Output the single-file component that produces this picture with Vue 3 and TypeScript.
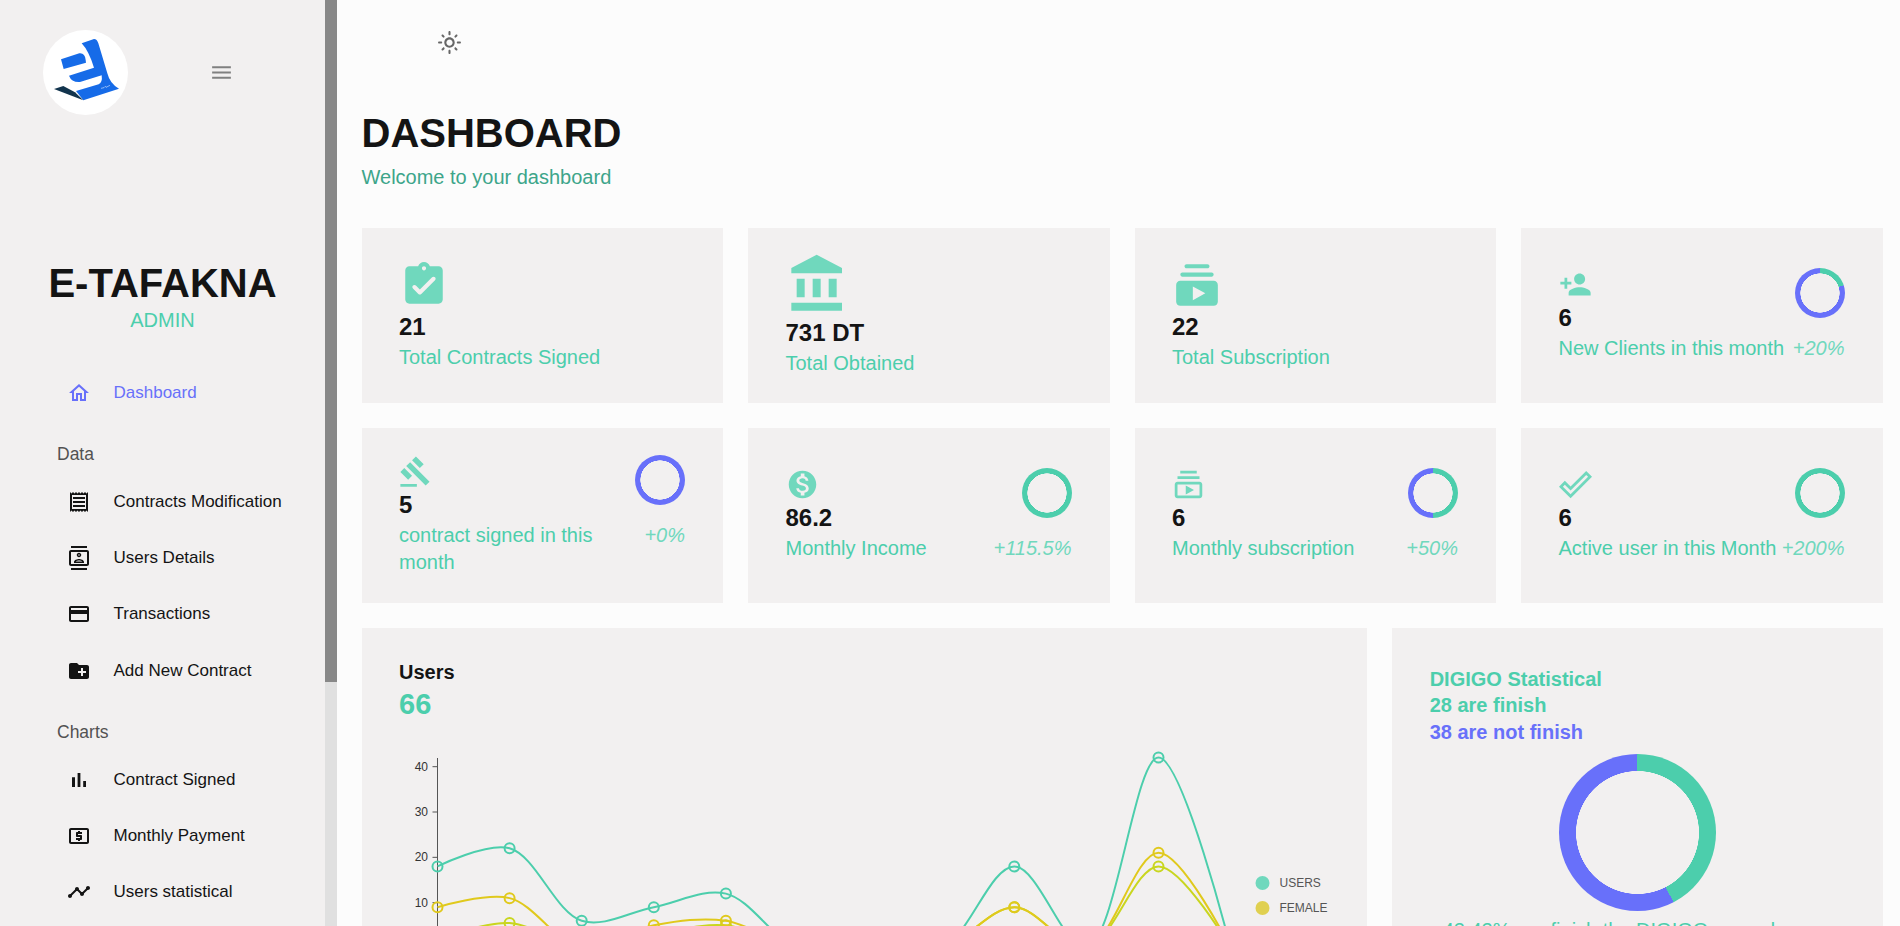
<template>
  <div class="layout">
    <aside class="sidebar">
      <div class="sidebar-body">
        <div class="brand-row">
          <svg class="logo" viewBox="69 60 255 255">
            <circle cx="196.5" cy="187.5" r="127.5" fill="#fff" />
            <path d="M102 237 L130 228 L165 247 L190 271 Z" fill="#12344d" />
            <path d="M123 148 L178 130 Q195 128 197 150 L198 158 L131 177 Z" fill="#166be8" />
            <path
              d="M185 100 L222 87 Q231 87 235 100 L262 190 Q270 222 297 236 L190 271 L168 243 L236 223 Q248 218 245 196 L180 216 Q155 218 147 197 L222 173 Q206 122 185 100 Z"
              fill="#166be8"
            />
            <path d="M243 235 L252 233 L256 229 L258 232 L270 226" fill="none" stroke="#fff" stroke-width="1.5" />
          </svg>
          <svg class="menu-icon" viewBox="0 0 24 24"><path :d="icons.menu" /></svg>
        </div>
        <div class="profile">
          <h2>E-TAFAKNA</h2>
          <p>ADMIN</p>
        </div>
        <nav>
          <template v-for="group in nav" :key="group.title">
            <div v-if="group.title" class="nav-title">{{ group.title }}</div>
            <a v-for="item in group.items" :key="item.label" class="nav-item" :class="{ active: item.active }">
              <svg viewBox="0 0 24 24"><path :d="item.icon" /></svg>
              <span>{{ item.label }}</span>
            </a>
          </template>
        </nav>
      </div>
      <div class="scrollbar"><div class="scrollbar-thumb"></div></div>
    </aside>

    <main class="content">
      <div class="topbar">
        <svg viewBox="0 0 24 24"><path :d="icons.sun" /></svg>
      </div>
      <header class="page-head">
        <h1>DASHBOARD</h1>
        <p>Welcome to your dashboard</p>
      </header>

      <section class="grid">
        <div v-for="stat in stats" :key="stat.label" class="stat-card">
          <div class="stat-top">
            <div>
              <svg class="stat-icon" :class="stat.size" viewBox="0 0 24 24"><path :d="stat.icon" fill-rule="evenodd" /></svg>
              <div class="stat-value">{{ stat.value }}</div>
            </div>
            <div v-if="stat.progress !== undefined" class="ring" :style="ringStyle(stat.progress)"></div>
          </div>
          <div class="stat-bottom">
            <span class="stat-label">{{ stat.label }}</span>
            <span v-if="stat.delta" class="stat-delta">{{ stat.delta }}</span>
          </div>
        </div>

        <div class="chart-card">
          <h3>Users</h3>
          <div class="chart-total">66</div>
          <svg class="line-chart" width="1006" height="300">
            <line x1="75.5" y1="35" x2="75.5" y2="300" stroke="#555" />
            <g v-for="t in [40, 30, 20, 10]" :key="t">
              <line x1="70.5" x2="75.5" :y1="yOf(t)" :y2="yOf(t)" stroke="#555" />
              <text x="66" :y="yOf(t) + 4" text-anchor="end" class="tick">{{ t }}</text>
            </g>
            <g v-for="s in series" :key="s.name">
              <path :d="linePath(s.values)" fill="none" :stroke="s.color" stroke-width="2" />
              <circle
                v-for="(v, i) in s.values"
                :key="i"
                :cx="xOf(i)"
                :cy="yOf(v)"
                r="5"
                fill="none"
                :stroke="s.color"
                stroke-width="2"
              />
            </g>
            <g v-for="l in legend" :key="l.name">
              <circle cx="900.5" :cy="l.y" r="7" :fill="l.color" />
              <text x="917.5" :y="l.y + 4" class="legend">{{ l.name }}</text>
            </g>
          </svg>
        </div>

        <div class="donut-card">
          <div class="donut-line">DIGIGO Statistical</div>
          <div class="donut-line">28 are finish</div>
          <div class="donut-line blue">38 are not finish</div>
          <div class="donut"></div>
          <p class="donut-caption">42.42% are finish the DIGIGO procedure</p>
        </div>
      </section>
    </main>
  </div>
</template>

<script setup lang="ts">
const icons = {
  menu: 'M3 18h18v-2H3v2zm0-5h18v-2H3v2zm0-7v2h18V6H3z',
  sun: 'M12 9c1.65 0 3 1.35 3 3s-1.35 3-3 3-3-1.35-3-3 1.35-3 3-3m0-2c-2.76 0-5 2.24-5 5s2.24 5 5 5 5-2.24 5-5-2.24-5-5-5zM2 13h2c.55 0 1-.45 1-1s-.45-1-1-1H2c-.55 0-1 .45-1 1s.45 1 1 1zm18 0h2c.55 0 1-.45 1-1s-.45-1-1-1h-2c-.55 0-1 .45-1 1s.45 1 1 1zM11 2v2c0 .55.45 1 1 1s1-.45 1-1V2c0-.55-.45-1-1-1s-1 .45-1 1zm0 18v2c0 .55.45 1 1 1s1-.45 1-1v-2c0-.55-.45-1-1-1s-1 .45-1 1zM5.99 4.58c-.39-.39-1.03-.39-1.41 0-.39.39-.39 1.03 0 1.41l1.06 1.06c.39.39 1.03.39 1.41 0s.39-1.03 0-1.41L5.99 4.58zm12.37 12.37c-.39-.39-1.03-.39-1.41 0-.39.39-.39 1.03 0 1.41l1.06 1.06c.39.39 1.03.39 1.41 0 .39-.39.39-1.03 0-1.41l-1.06-1.06zm1.06-10.96c.39-.39.39-1.03 0-1.41-.39-.39-1.03-.39-1.41 0l-1.06 1.06c-.39.39-.39 1.03 0 1.41s1.03.39 1.41 0l1.06-1.06zM7.05 18.36c.39-.39.39-1.03 0-1.41-.39-.39-1.03-.39-1.41 0l-1.06 1.06c-.39.39-.39 1.03 0 1.41s1.03.39 1.41 0l1.06-1.06z',
  home: 'M12 5.69l5 4.5V18h-2v-6H9v6H7v-7.81l5-4.5M12 3L2 12h3v8h6v-6h2v6h6v-8h3L12 3z',
  receipt: 'M19.5 3.5 18 2l-1.5 1.5L15 2l-1.5 1.5L12 2l-1.5 1.5L9 2 7.5 3.5 6 2 4.5 3.5 3 2v20l1.5-1.5L6 22l1.5-1.5L9 22l1.5-1.5L12 22l1.5-1.5L15 22l1.5-1.5L18 22l1.5-1.5L21 22V2l-1.5 1.5zM19 19.09H5V4.91h14v14.18zM6 15h12v2H6zm0-4h12v2H6zm0-4h12v2H6z',
  contacts: 'M20 0H4v2h16V0zM4 24h16v-2H4v2zM20 4H4c-1.1 0-2 .9-2 2v12c0 1.1.9 2 2 2h16c1.1 0 2-.9 2-2V6c0-1.1-.9-2-2-2zm0 14H4V6h16v12zm-8-6.75c1.24 0 2.25-1.01 2.25-2.25S13.24 6.75 12 6.75 9.75 7.76 9.75 9s1.01 2.25 2.25 2.25zm0-3c.41 0 .75.34.75.75s-.34.75-.75.75-.75-.34-.75-.75.34-.75.75-.75zM17 15.99c0-2.09-3.31-2.99-5-2.99s-5 .9-5 2.99V17h10v-1.01zm-8.19-.49c.61-.52 2.03-1 3.19-1 1.17 0 2.59.48 3.2 1H8.81z',
  card: 'M20 4H4c-1.11 0-1.99.89-1.99 2L2 18c0 1.11.89 2 2 2h16c1.11 0 2-.89 2-2V6c0-1.11-.89-2-2-2zm0 14H4v-6h16v6zm0-10H4V6h16v2z',
  folder: 'M20 6h-8l-2-2H4c-1.11 0-1.99.89-1.99 2L2 18c0 1.11.89 2 2 2h16c1.11 0 2-.89 2-2V8c0-1.11-.89-2-2-2zm-1 8h-3v3h-2v-3h-3v-2h3V9h2v3h3v2z',
  bars: 'M5 9.2h3V19H5zM10.6 5h2.8v14h-2.8zm5.6 8H19v6h-2.8z',
  atm: 'M11 17h2v-1h1c.55 0 1-.45 1-1v-3c0-.55-.45-1-1-1h-3v-1h4V8h-2V7h-2v1h-1c-.55 0-1 .45-1 1v3c0 .55.45 1 1 1h3v1H9v2h2v1zm9-13H4c-1.11 0-1.99.89-1.99 2L2 18c0 1.11.89 2 2 2h16c1.11 0 2-.89 2-2V6c0-1.11-.89-2-2-2zm0 14H4V6h16v12z',
  timeline: 'M23 8c0 1.1-.9 2-2 2-.18 0-.35-.02-.51-.07l-3.56 3.55c.05.16.07.34.07.52 0 1.1-.9 2-2 2s-2-.9-2-2c0-.18.02-.36.07-.52l-2.55-2.55c-.16.05-.34.07-.52.07s-.36-.02-.52-.07l-4.55 4.56c.05.16.07.33.07.51 0 1.1-.9 2-2 2s-2-.9-2-2 .9-2 2-2c.18 0 .35.02.51.07l4.56-4.55C8.02 9.36 8 9.18 8 9c0-1.1.9-2 2-2s2 .9 2 2c0 .18-.02.36-.07.52l2.55 2.55c.16-.05.34-.07.52-.07s.36.02.52.07l3.55-3.56C19.02 8.35 19 8.18 19 8c0-1.1.9-2 2-2s2 .9 2 2z',
  assignment: 'M19 3h-4.18C14.4 1.84 13.3 1 12 1s-2.4.84-2.82 2H5c-1.1 0-2 .9-2 2v14c0 1.1.9 2 2 2h14c1.1 0 2-.9 2-2V5c0-1.1-.9-2-2-2zm-7 0c.55 0 1 .45 1 1s-.45 1-1 1-1-.45-1-1 .45-1 1-1zM9.29 16.29 6.7 13.7a.9959.9959 0 0 1 0-1.41c.39-.39 1.02-.39 1.41 0L10 14.17l5.88-5.88c.39-.39 1.02-.39 1.41 0 .39.39.39 1.02 0 1.41l-6.59 6.59c-.38.39-1.02.39-1.41 0z',
  bank: 'M4 10v7h3v-7H4zm6 0v7h3v-7h-3zM2 22h19v-3H2v3zm14-12v7h3v-7h-3zm-4.5-9L2 6v2h19V6l-9.5-5z',
  subs: 'M19 8H5c-.55 0-1-.45-1-1s.45-1 1-1h14c.55 0 1 .45 1 1s-.45 1-1 1zm-2-4H7c-.55 0-1-.45-1-1s.45-1 1-1h10c.55 0 1 .45 1 1s-.45 1-1 1zm3 6H4c-1.1 0-2 .9-2 2v8c0 1.1.9 2 2 2h16c1.1 0 2-.9 2-2v-8c0-1.1-.9-2-2-2zm-10 2.73 6 3.27-6 3.27z',
  subsOutline: 'M4 6h16v2H4zm2-4h12v2H6zm14 8H4c-1.1 0-2 .9-2 2v8c0 1.1.9 2 2 2h16c1.1 0 2-.9 2-2v-8c0-1.1-.9-2-2-2zm0 10H4v-8h16v8zm-10-7.27v6.53L16 16z',
  personAdd: 'M15 12c2.21 0 4-1.79 4-4s-1.79-4-4-4-4 1.79-4 4 1.79 4 4 4zm-9-2V7H4v3H1v2h3v3h2v-3h3v-2H6zm9 4c-2.67 0-8 1.34-8 4v2h16v-2c0-2.66-5.33-4-8-4z',
  gavel: 'M1 21h12v2H1v-2zM5.245 8.07l2.83-2.827 14.14 14.142-2.828 2.828L5.245 8.07zM12.317 1l5.657 5.656-2.83 2.83-5.654-5.66L12.317 1zM3.825 9.485l5.657 5.657-2.828 2.828-5.657-5.657 2.828-2.828z',
  money: 'M12 2C6.48 2 2 6.48 2 12s4.48 10 10 10 10-4.48 10-10S17.52 2 12 2zm1.41 16.09V20h-2.67v-1.93c-1.71-.36-3.16-1.46-3.27-3.4h1.96c.1 1.05.82 1.87 2.65 1.87 1.96 0 2.4-.98 2.4-1.59 0-.83-.44-1.61-2.67-2.14-2.48-.6-4.18-1.62-4.18-3.67 0-1.72 1.39-2.84 3.11-3.21V4h2.67v1.95c1.86.45 2.79 1.86 2.87 3.39H14.3c-.05-1.11-.64-1.87-2.22-1.87-1.5 0-2.4.68-2.4 1.64 0 .84.65 1.39 2.67 1.91s4.18 1.39 4.18 3.91c-.01 1.83-1.38 2.83-3.12 3.16z',
  doneOutline: 'M19.77 5.03l1.4 1.4L8.43 19.17l-5.6-5.6 1.4-1.4 4.2 4.2L19.77 5.03m0-2.83L8.43 13.54l-4.2-4.2L0 13.57 8.43 22 24 6.43 19.77 2.2z',
}

const nav = [
  { title: '', items: [{ label: 'Dashboard', icon: icons.home, active: true }] },
  {
    title: 'Data',
    items: [
      { label: 'Contracts Modification', icon: icons.receipt },
      { label: 'Users Details', icon: icons.contacts },
      { label: 'Transactions', icon: icons.card },
      { label: 'Add New Contract', icon: icons.folder },
    ],
  },
  {
    title: 'Charts',
    items: [
      { label: 'Contract Signed', icon: icons.bars },
      { label: 'Monthly Payment', icon: icons.atm },
      { label: 'Users statistical', icon: icons.timeline },
    ],
  },
]

type Stat = {
  icon: string
  size: string
  value: string
  label: string
  delta?: string
  progress?: number
}

const stats: Stat[] = [
  { icon: icons.assignment, size: 'lg', value: '21', label: 'Total Contracts Signed' },
  { icon: icons.bank, size: 'xl', value: '731 DT', label: 'Total Obtained' },
  { icon: icons.subs, size: 'lg', value: '22', label: 'Total Subscription' },
  { icon: icons.personAdd, size: 'sm', value: '6', label: 'New Clients in this month', delta: '+20%', progress: 0.2 },
  { icon: icons.gavel, size: 'sm', value: '5', label: 'contract signed in this month', delta: '+0%', progress: 0 },
  { icon: icons.money, size: 'sm', value: '86.2', label: 'Monthly Income', delta: '+115.5%', progress: 1.155 },
  { icon: icons.subsOutline, size: 'sm', value: '6', label: 'Monthly subscription', delta: '+50%', progress: 0.5 },
  { icon: icons.doneOutline, size: 'sm', value: '6', label: 'Active user in this Month', delta: '+200%', progress: 2 },
]

function ringStyle(progress: number) {
  const angle = Math.min(progress, 1) * 360
  return {
    background: `radial-gradient(#f2f0f0 55%, transparent 56%), conic-gradient(transparent 0deg ${angle}deg, #6870fa ${angle}deg 360deg), #4cceac`,
  }
}

const series = [
  { name: 'male', color: '#c9d61f', values: [2, 5.5, 0, 3, 5, 0, 0, 0, 9, 0, 18, 0] },
  { name: 'female', color: '#e0c91c', values: [9, 11, 0, 5, 6, 0, 0, 0, 9, 0, 21, 0] },
  { name: 'users', color: '#4cceac', values: [18, 22, 6, 9, 12, 0, 0, 0, 18, 0, 42, 0] },
]

const legend = [
  { name: 'USERS', color: '#70d8bd', y: 160 },
  { name: 'FEMALE', color: '#e0d050', y: 185 },
]

const xOf = (i: number) => 75.5 + i * 72.1
const yOf = (v: number) => 225 - v * 4.533

function linePath(values: number[]) {
  const pts = values.map((v, i) => [xOf(i), yOf(v)])
  let d = `M${pts[0][0]} ${pts[0][1]}`
  for (let i = 0; i < pts.length - 1; i++) {
    const p0 = pts[Math.max(i - 1, 0)]
    const p1 = pts[i]
    const p2 = pts[i + 1]
    const p3 = pts[Math.min(i + 2, pts.length - 1)]
    const l01 = Math.hypot(p1[0] - p0[0], p1[1] - p0[1])
    const l12 = Math.hypot(p2[0] - p1[0], p2[1] - p1[1])
    const l23 = Math.hypot(p3[0] - p2[0], p3[1] - p2[1])
    const a01 = Math.sqrt(l01)
    const a12 = Math.sqrt(l12)
    const a23 = Math.sqrt(l23)
    let c1 = p1
    let c2 = p2
    if (l01 > 0) {
      const a = 2 * l01 + 3 * a01 * a12 + l12
      const n = 3 * a01 * (a01 + a12)
      c1 = [0, 1].map(k => (p1[k] * a - p0[k] * l12 + p2[k] * l01) / n)
    }
    if (l23 > 0) {
      const b = 2 * l23 + 3 * a23 * a12 + l12
      const m = 3 * a23 * (a23 + a12)
      c2 = [0, 1].map(k => (p2[k] * b + p1[k] * l23 - p3[k] * l12) / m)
    }
    d += ` C${c1[0]} ${c1[1]} ${c2[0]} ${c2[1]} ${p2[0]} ${p2[1]}`
  }
  return d
}
</script>

<style>
html,
body {
  margin: 0;
  overflow: hidden;
}
</style>

<style scoped>
.layout {
  display: flex;
  height: 926px;
  overflow: hidden;
  font-family: 'Liberation Sans', Arial, sans-serif;
  color: #141414;
}

.sidebar {
  flex: 0 0 337px;
  display: flex;
  height: 926px;
  overflow: hidden;
  background: #f2f0f0;
}

.sidebar-body {
  flex: 0 0 325px;
}

.scrollbar {
  flex: 0 0 12px;
  background: #e0e0e0;
}

.scrollbar-thumb {
  height: 682px;
  background: #888;
}

.brand-row {
  display: flex;
  align-items: center;
  padding: 30px 0 0 43px;
}

.logo {
  width: 85px;
  height: 85px;
}

.menu-icon {
  width: 25px;
  height: 25px;
  margin-left: 81px;
  fill: #808080;
}

.profile {
  margin-top: 144px;
  text-align: center;
}

.profile h2 {
  margin: 0;
  font-size: 40px;
  line-height: 48px;
  font-weight: 700;
}

.profile p {
  margin: 0 0 31px;
  font-size: 20px;
  line-height: 26.6px;
  color: #4cceac;
}

.nav-title {
  padding: 22px 0 7px 57px;
  font-size: 17.5px;
  line-height: 23.4px;
  color: #525252;
}

.nav-item {
  display: flex;
  align-items: center;
  gap: 22.5px;
  height: 56.4px;
  padding-left: 67px;
  font-size: 17px;
  color: #141414;
}

.nav-item svg {
  flex: none;
  width: 24px;
  height: 24px;
  fill: #141414;
}

.nav-item.active {
  color: #6870fa;
}

.nav-item.active svg {
  fill: #6870fa;
}

.content {
  flex: 1;
  min-width: 0;
  padding: 0 17.5px 0 24.5px;
  background: #fcfcfc;
}

.topbar {
  height: 25px;
  padding: 29.5px 0 0 75.5px;
}

.topbar svg {
  display: block;
  width: 25px;
  height: 25px;
  fill: #666;
}

.page-head {
  margin-top: 54.5px;
}

.page-head h1 {
  margin: 0 0 7px;
  font-size: 40px;
  line-height: 48px;
  font-weight: 700;
}

.page-head p {
  margin: 0 0 36.7px;
  font-size: 20px;
  line-height: 27px;
  color: #3da58a;
}

.grid {
  display: grid;
  grid-template-columns: repeat(12, 1fr);
  grid-template-rows: 175px 175px 400px;
  gap: 25px;
}

.stat-card {
  grid-column: span 3;
  display: flex;
  flex-direction: column;
  justify-content: center;
  padding: 0 38px 0 37.5px;
  background: #f2f0f0;
}

.stat-top,
.stat-bottom {
  display: flex;
  justify-content: space-between;
}

.stat-bottom {
  margin-top: 1px;
}

.stat-icon {
  display: block;
  fill: #70d8bd;
}

.stat-icon.lg {
  width: 50px;
  height: 50px;
}

.stat-icon.sm {
  width: 33px;
  height: 33px;
}

.stat-icon.xl {
  width: 64px;
  height: 64px;
  margin: -1.5px 0 -0.5px;
}

.stat-value {
  padding-top: 1px;
  font-size: 24px;
  line-height: 32px;
  font-weight: 700;
}

.stat-label {
  font-size: 20px;
  line-height: 27px;
  color: #4cceac;
}

.stat-delta {
  flex: none;
  font-size: 20px;
  line-height: 27px;
  font-style: italic;
  color: #70d8bd;
}

.ring {
  flex: none;
  width: 50px;
  height: 50px;
  border-radius: 50%;
}

.chart-card {
  grid-column: span 8;
  padding-top: 31px;
  background: #f2f0f0;
}

.chart-card h3 {
  margin: 0 0 0 37.5px;
  font-size: 20px;
  line-height: 27px;
  font-weight: 700;
}

.chart-total {
  margin-left: 37.5px;
  font-size: 29px;
  line-height: 37px;
  font-weight: 700;
  color: #4cceac;
}

.line-chart {
  display: block;
}

.tick {
  font-size: 12px;
  fill: #333;
}

.legend {
  font-size: 12px;
  fill: #555;
}

.donut-card {
  grid-column: span 4;
  padding: 38px 37.5px;
  background: #f2f0f0;
}

.donut-line {
  font-size: 20px;
  line-height: 26.7px;
  font-weight: 700;
  color: #4cceac;
}

.donut-line.blue {
  color: #6870fa;
}

.donut {
  width: 157px;
  height: 157px;
  margin: 8px auto 0;
  border-radius: 50%;
  background:
    radial-gradient(circle closest-side, #f2f0f0 78%, transparent 78.6%),
    conic-gradient(#4cceac 0 152.7deg, #6870fa 152.7deg 360deg);
}

.donut-caption {
  margin: 6px 0 0 13px;
  font-size: 20px;
  line-height: 27px;
  color: #4cceac;
  white-space: nowrap;
}
</style>
